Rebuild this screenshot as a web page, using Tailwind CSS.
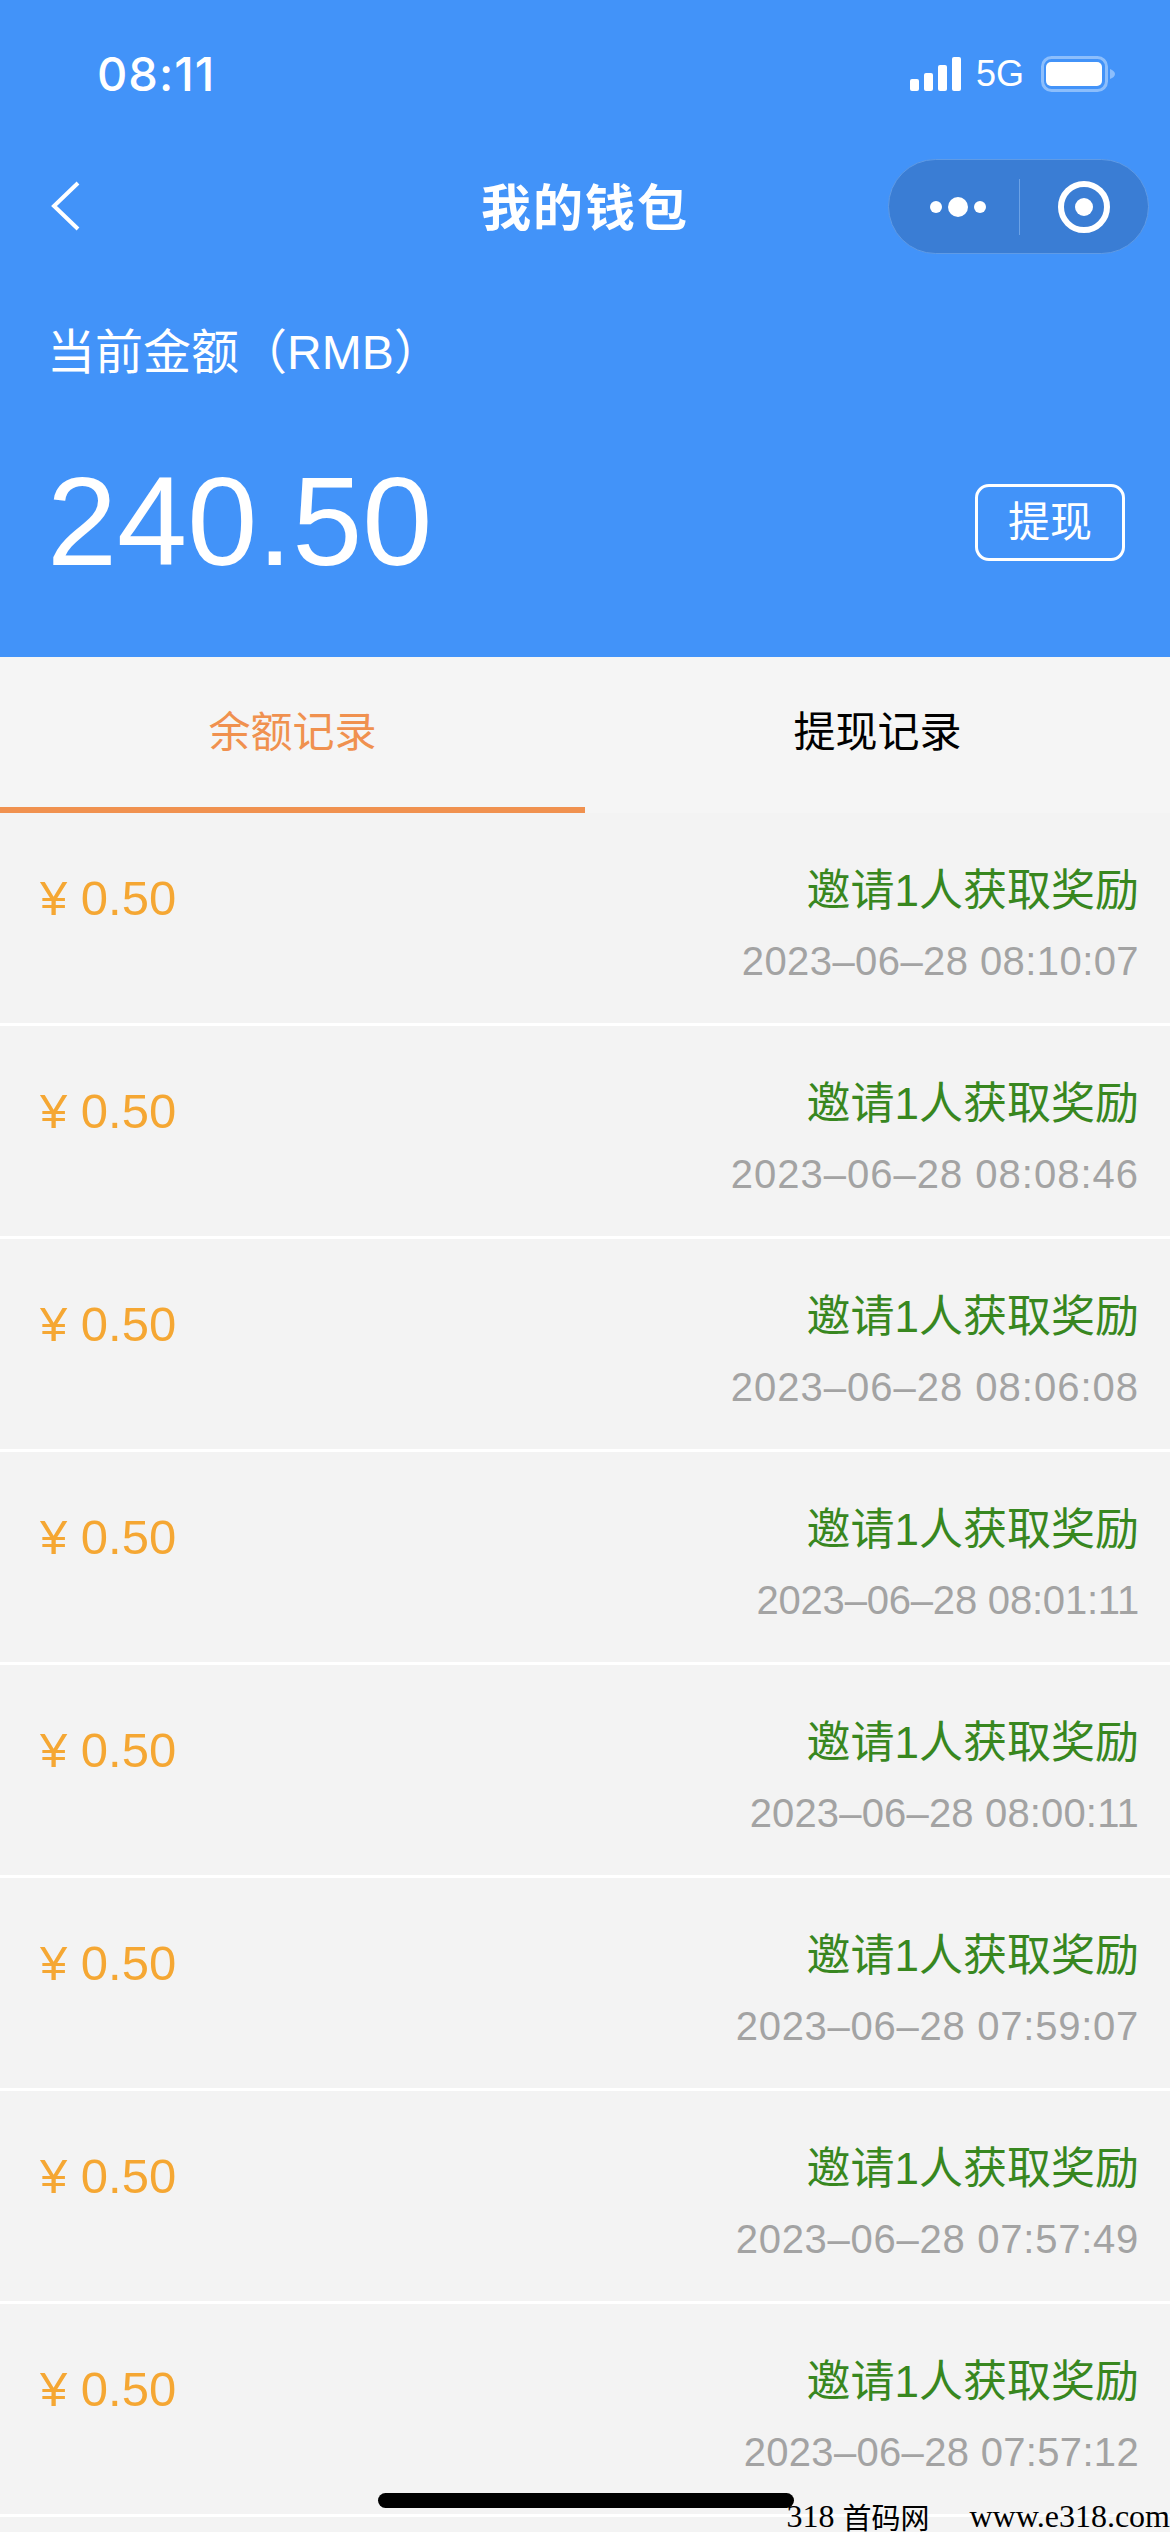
<!DOCTYPE html>
<html lang="zh">
<head>
  <meta charset="UTF-8">
  <title>我的钱包</title>
  <script src="https://cdn.jsdelivr.net/npm/@tailwindcss/browser@4"></script>
</head>
<body class="w-[1170px] h-[2532px] overflow-hidden relative bg-[#f3f3f3] font-['Liberation_Sans','Noto_Sans_CJK_SC',sans-serif]">
  <header class="h-[657px] bg-[#4293f9] text-white flex flex-col">
    <div class="h-[148px] flex items-start justify-between pt-[50px] pl-[97px] pr-[55px]">
      <span class="text-[47px] leading-[48px] tracking-[1px] font-medium font-['Inter','Liberation_Sans',sans-serif]">08:11</span>
      <div class="flex items-center h-[48px]">
        <svg width="51" height="34" viewBox="0 0 51 34" fill="#fff"><rect x="0" y="22" width="9" height="12" rx="2"/><rect x="14" y="16" width="9" height="18" rx="2"/><rect x="28" y="8" width="9" height="26" rx="2"/><rect x="42" y="0" width="9" height="34" rx="2"/></svg>
        <span class="ml-[15px] mr-[17px] text-[36px] leading-[40px]">5G</span>
        <svg width="74" height="36" viewBox="0 0 74 36" fill="none"><rect x="1.5" y="1.5" width="64" height="33" rx="9" stroke="#8cbefc" stroke-width="3"/><rect x="5" y="6" width="56" height="24" rx="5" fill="#fff"/><path d="M69 13c3 1 5 3 5 5s-2 4-5 5z" fill="#8cbefc"/></svg>
      </div>
    </div>
    <div class="h-[120px] relative flex items-center justify-center">
      <svg class="absolute left-[48px] top-[31px]" width="34" height="54" viewBox="0 0 34 54" fill="none"><path d="M30 4 6 27l24 23" stroke="#fff" stroke-width="4"/></svg>
      <h1 class="mt-[3px] text-[50px] font-bold tracking-[2px]">我的钱包</h1>
      <div class="absolute right-[21px] top-[11px] w-[261px] h-[95px] rounded-full bg-[#3a7dd4] border border-[#5f9be6] flex items-center">
        <div class="w-[130px] flex items-center justify-center gap-[6px] pl-[7px]">
          <span class="w-[12px] h-[12px] rounded-full bg-white"></span>
          <span class="w-[20px] h-[20px] rounded-full bg-white"></span>
          <span class="w-[12px] h-[12px] rounded-full bg-white"></span>
        </div>
        <div class="w-px h-[56px] bg-[#6ba2e6]"></div>
        <div class="flex-1 flex items-center justify-center">
          <div class="w-[52px] h-[52px] rounded-full border-[6px] border-white flex items-center justify-center">
            <span class="w-[18px] h-[18px] rounded-full bg-white"></span>
          </div>
        </div>
      </div>
    </div>
    <div class="pl-[47px] pt-[55px] text-[48px] leading-[60px]">当前金额（RMB）</div>
    <div class="flex items-center justify-between pl-[47px] pr-[45px] mt-[74px]">
      <span class="text-[126px] leading-[130px]">240.50</span>
      <button class="w-[150px] h-[77px] rounded-[14px] border-[3px] border-white text-[42px]">提现</button>
    </div>
  </header>

  <div class="flex h-[156px] bg-[#f5f5f5] text-[42px]">
    <div class="w-1/2 flex items-center justify-center border-b-[6px] border-[#f0914f] text-[#f0914f]">余额记录</div>
    <div class="w-1/2 flex items-center justify-center text-black pb-[6px]">提现记录</div>
  </div>

  <ul>
    <li class="h-[213px] border-b-[3px] border-white flex justify-between pl-[40px] pr-[31px]"><span class="mt-[55px] text-[49px] leading-[60px] text-[#f5a733]">¥ 0.50</span><div class="text-right"><p class="mt-[48px] text-[44px] leading-[60px] text-[#38871f]">邀请1人获取奖励</p><p class="mt-[15px] text-[40px] leading-[50px] tracking-[0.42px] text-[#a3a3a3]">2023–06–28 08:10:07</p></div></li>
    <li class="h-[213px] border-b-[3px] border-white flex justify-between pl-[40px] pr-[31px]"><span class="mt-[55px] text-[49px] leading-[60px] text-[#f5a733]">¥ 0.50</span><div class="text-right"><p class="mt-[48px] text-[44px] leading-[60px] text-[#38871f]">邀请1人获取奖励</p><p class="mt-[15px] text-[40px] leading-[50px] tracking-[1px] text-[#a3a3a3]">2023–06–28 08:08:46</p></div></li>
    <li class="h-[213px] border-b-[3px] border-white flex justify-between pl-[40px] pr-[31px]"><span class="mt-[55px] text-[49px] leading-[60px] text-[#f5a733]">¥ 0.50</span><div class="text-right"><p class="mt-[48px] text-[44px] leading-[60px] text-[#38871f]">邀请1人获取奖励</p><p class="mt-[15px] text-[40px] leading-[50px] tracking-[1px] text-[#a3a3a3]">2023–06–28 08:06:08</p></div></li>
    <li class="h-[213px] border-b-[3px] border-white flex justify-between pl-[40px] pr-[31px]"><span class="mt-[55px] text-[49px] leading-[60px] text-[#f5a733]">¥ 0.50</span><div class="text-right"><p class="mt-[48px] text-[44px] leading-[60px] text-[#38871f]">邀请1人获取奖励</p><p class="mt-[15px] text-[40px] leading-[50px] tracking-[-0.2px] text-[#a3a3a3]">2023–06–28 08:01:11</p></div></li>
    <li class="h-[213px] border-b-[3px] border-white flex justify-between pl-[40px] pr-[31px]"><span class="mt-[55px] text-[49px] leading-[60px] text-[#f5a733]">¥ 0.50</span><div class="text-right"><p class="mt-[48px] text-[44px] leading-[60px] text-[#38871f]">邀请1人获取奖励</p><p class="mt-[15px] text-[40px] leading-[50px] tracking-[0.16px] text-[#a3a3a3]">2023–06–28 08:00:11</p></div></li>
    <li class="h-[213px] border-b-[3px] border-white flex justify-between pl-[40px] pr-[31px]"><span class="mt-[55px] text-[49px] leading-[60px] text-[#f5a733]">¥ 0.50</span><div class="text-right"><p class="mt-[48px] text-[44px] leading-[60px] text-[#38871f]">邀请1人获取奖励</p><p class="mt-[15px] text-[40px] leading-[50px] tracking-[0.74px] text-[#a3a3a3]">2023–06–28 07:59:07</p></div></li>
    <li class="h-[213px] border-b-[3px] border-white flex justify-between pl-[40px] pr-[31px]"><span class="mt-[55px] text-[49px] leading-[60px] text-[#f5a733]">¥ 0.50</span><div class="text-right"><p class="mt-[48px] text-[44px] leading-[60px] text-[#38871f]">邀请1人获取奖励</p><p class="mt-[15px] text-[40px] leading-[50px] tracking-[0.74px] text-[#a3a3a3]">2023–06–28 07:57:49</p></div></li>
    <li class="h-[213px] border-b-[3px] border-white flex justify-between pl-[40px] pr-[31px]"><span class="mt-[55px] text-[49px] leading-[60px] text-[#f5a733]">¥ 0.50</span><div class="text-right"><p class="mt-[48px] text-[44px] leading-[60px] text-[#38871f]">邀请1人获取奖励</p><p class="mt-[15px] text-[40px] leading-[50px] tracking-[0.32px] text-[#a3a3a3]">2023–06–28 07:57:12</p></div></li>
  </ul>

  <div class="absolute left-[378px] top-[2493px] w-[416px] h-[15px] rounded-full bg-black"></div>
  <div class="absolute right-0 top-[2501px] h-[30px] flex items-center text-[32px] leading-[30px] text-black font-['Liberation_Serif','Noto_Sans_CJK_SC',serif] whitespace-pre">
    <span>318</span><span class="ml-[8px] text-[29px] font-['Noto_Sans_CJK_SC',serif]">首码网</span><span class="ml-[40px]">www.e318.com</span>
  </div>
</body>
</html>
